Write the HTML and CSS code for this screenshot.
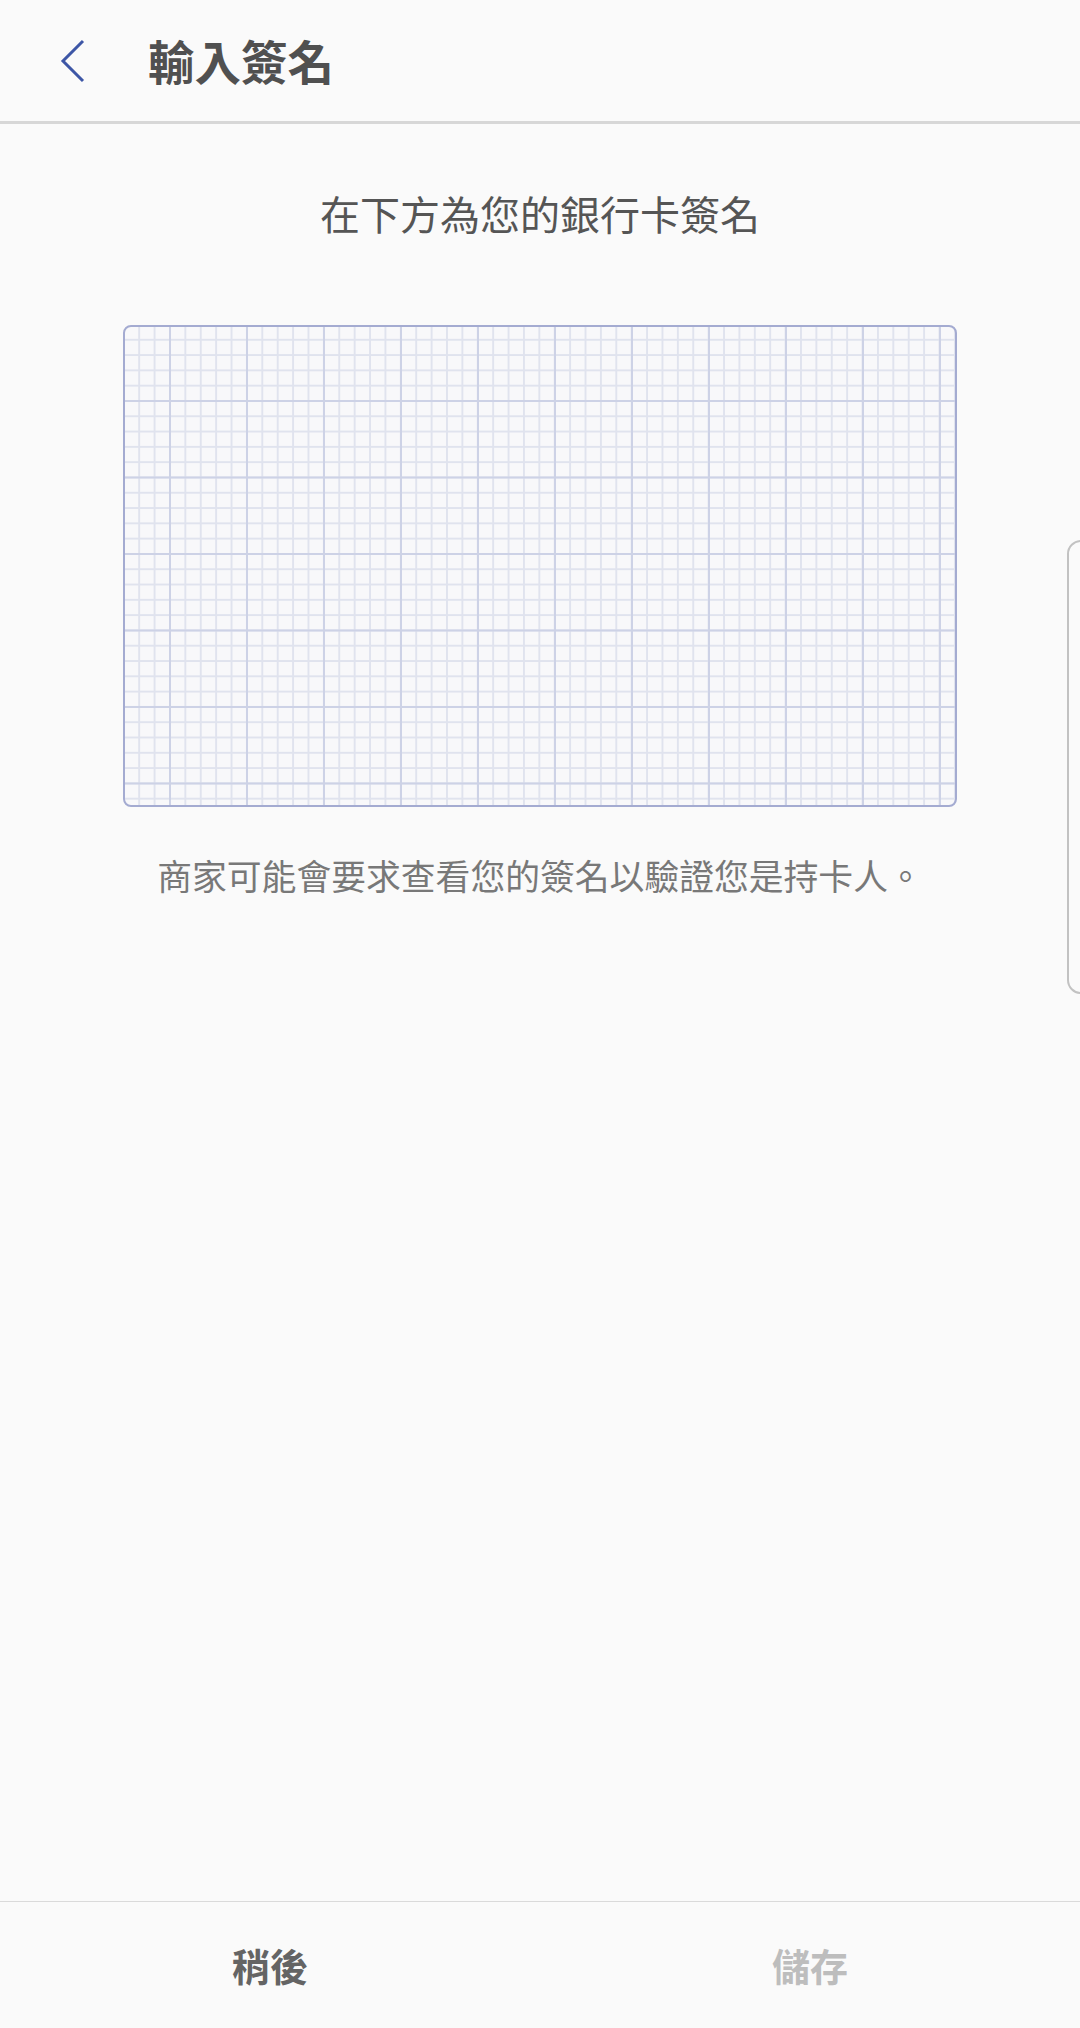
FILE: index.html
```html
<!DOCTYPE html>
<html lang="zh-Hant">
<head>
<meta charset="utf-8">
<title>輸入簽名</title>
<link rel="stylesheet" href="styles.css">
</head>
<body>
<div class="screen">
  <header class="appbar">
    <button class="back" aria-label="返回">
      <svg width="26" height="44" viewBox="0 0 26 44"><path d="M23 2 L3 22 L23 42" fill="none" stroke="#3d56a6" stroke-width="3"/></svg>
    </button>
    <h1 class="title">輸入簽名</h1>
  </header>
  <main class="content">
    <p class="subtitle">在下方為您的銀行卡簽名</p>
    <div class="pad"></div>
    <p class="caption">商家可能會要求查看您的簽名以驗證您是持卡人。</p>
  </main>
  <footer class="actions">
    <button class="action later">稍後</button>
    <button class="action save" disabled>儲存</button>
  </footer>
  <div class="edge-handle"></div>
</div>
</body>
</html>
```

FILE: styles.css
```css
html, body {
  margin: 0;
  padding: 0;
  background: #fafafa;
}
body {
  font-family: "Noto Sans CJK TC", "Noto Sans", sans-serif;
}
.screen {
  position: relative;
  width: 1080px;
  height: 2028px;
  display: flex;
  flex-direction: column;
  overflow: hidden;
  background: #fafafa;
}
.appbar {
  height: 121px;
  border-bottom: 3px solid #d7d7d7;
  display: flex;
  align-items: center;
  box-sizing: content-box;
}
.back {
  border: 0;
  background: transparent;
  padding: 0;
  margin: 0 0 0 60px;
  width: 26px;
  height: 44px;
  display: flex;
}
.title {
  margin: 0 0 0 62px;
  font-size: 46.5px;
  font-weight: 700;
  color: #505050;
  line-height: 1;
}
.content {
  flex: 1;
  display: flex;
  flex-direction: column;
  align-items: center;
  padding-top: 61px;
}
.subtitle {
  margin: 0;
  font-size: 40px;
  line-height: 56px;
  color: #555555;
}
.pad {
  margin-top: 84px;
  width: 830px;
  height: 478px;
  border: 2px solid #a4abd1;
  border-radius: 8px;
  background-color: #f8f8fa;
  background-image:
    linear-gradient(to right, #cdd2e6 0, #cdd2e6 2px, transparent 2px),
    linear-gradient(to bottom, #cdd2e6 0, #cdd2e6 2px, transparent 2px),
    linear-gradient(to right, #e0e3ee 0, #e0e3ee 1.5px, transparent 1.5px),
    linear-gradient(to bottom, #e0e3ee 0, #e0e3ee 1.5px, transparent 1.5px);
  background-size: 77px 100%, 100% 76.5px, 15.4px 100%, 100% 15.3px;
  background-position: 44px 0, 0 73px, 44px 0, 0 73px;
}
.caption {
  margin: 46px 0 0;
  font-size: 34.8px;
  line-height: 44px;
  color: #787878;
}
.actions {
  height: 126px;
  border-top: 1.5px solid #dadada;
  display: flex;
}
.action {
  flex: 1;
  border: 0;
  background: transparent;
  font-family: inherit;
  font-size: 38px;
  font-weight: 700;
  padding: 0;
  line-height: 1;
}
.later { color: #646464; }
.save { color: #bdbdbd; }
.edge-handle {
  position: absolute;
  left: 1067px;
  top: 540px;
  width: 40px;
  height: 450px;
  border: 2px solid #c2c2c2;
  border-radius: 14px;
}
```
